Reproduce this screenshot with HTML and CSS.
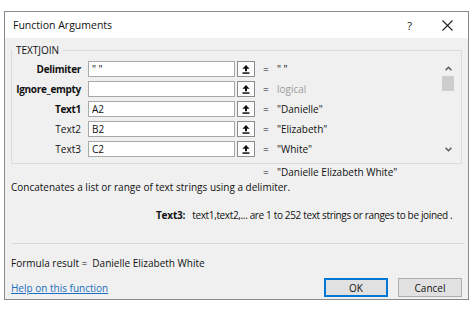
FILE: index.html
```html
<html lang="en">
<head>
  <meta charset="UTF-8">
  <title>Function Arguments</title>
  <link rel="stylesheet" href="styles.css">
</head>
<body>
  <div class="dialog">
    <div class="titlebar">
      <span class="title">Function Arguments</span>
      <span class="help">?</span>
      <span class="close">
        <svg width="11" height="11" viewBox="0 0 11 11"><path d="M0.5 0.5 L10.5 10.5 M10.5 0.5 L0.5 10.5" stroke="#222" stroke-width="1.1" fill="none"/></svg>
      </span>
    </div>

    <div class="content">
      <fieldset class="args">
        <legend>TEXTJOIN</legend>
        <div class="args-inner">
          <div class="rows">
            <div class="row">
              <label class="name bold">Delimiter</label>
              <div class="field">" "</div>
              <button class="pick"><svg width="8" height="9" viewBox="0 0 8 9"><path d="M4 0 L7.6 3.8 L5 3.8 L5 6.2 L3 6.2 L3 3.8 L0.4 3.8 Z" fill="#111"/><rect x="0.5" y="7.3" width="7" height="1.5" fill="#111"/></svg></button>
              <span class="eq">=</span>
              <span class="val">" "</span>
            </div>
            <div class="row">
              <label class="name bold">Ignore_empty</label>
              <div class="field"></div>
              <button class="pick"><svg width="8" height="9" viewBox="0 0 8 9"><path d="M4 0 L7.6 3.8 L5 3.8 L5 6.2 L3 6.2 L3 3.8 L0.4 3.8 Z" fill="#111"/><rect x="0.5" y="7.3" width="7" height="1.5" fill="#111"/></svg></button>
              <span class="eq">=</span>
              <span class="val muted">logical</span>
            </div>
            <div class="row">
              <label class="name bold">Text1</label>
              <div class="field">A2</div>
              <button class="pick"><svg width="8" height="9" viewBox="0 0 8 9"><path d="M4 0 L7.6 3.8 L5 3.8 L5 6.2 L3 6.2 L3 3.8 L0.4 3.8 Z" fill="#111"/><rect x="0.5" y="7.3" width="7" height="1.5" fill="#111"/></svg></button>
              <span class="eq">=</span>
              <span class="val">"Danielle"</span>
            </div>
            <div class="row">
              <label class="name">Text2</label>
              <div class="field">B2</div>
              <button class="pick"><svg width="8" height="9" viewBox="0 0 8 9"><path d="M4 0 L7.6 3.8 L5 3.8 L5 6.2 L3 6.2 L3 3.8 L0.4 3.8 Z" fill="#111"/><rect x="0.5" y="7.3" width="7" height="1.5" fill="#111"/></svg></button>
              <span class="eq">=</span>
              <span class="val">"Elizabeth"</span>
            </div>
            <div class="row">
              <label class="name">Text3</label>
              <div class="field">C2</div>
              <button class="pick"><svg width="8" height="9" viewBox="0 0 8 9"><path d="M4 0 L7.6 3.8 L5 3.8 L5 6.2 L3 6.2 L3 3.8 L0.4 3.8 Z" fill="#111"/><rect x="0.5" y="7.3" width="7" height="1.5" fill="#111"/></svg></button>
              <span class="eq">=</span>
              <span class="val">"White"</span>
            </div>
          </div>

          <div class="scroll">
            <div class="arrow"><svg width="7" height="5" viewBox="0 0 7 5"><path d="M0.6 4.2 L3.5 1.2 L6.4 4.2" stroke="#555" stroke-width="1.4" fill="none"/></svg></div>
            <div class="thumb"></div>
            <div class="track"></div>
            <div class="arrow"><svg width="7" height="5" viewBox="0 0 7 5"><path d="M0.6 0.8 L3.5 3.8 L6.4 0.8" stroke="#555" stroke-width="1.4" fill="none"/></svg></div>
          </div>
        </div>
      </fieldset>

      <div class="result"><span class="eq">=</span><span>"Danielle Elizabeth White"</span></div>
      <p class="desc">Concatenates a list or range of text strings using a delimiter.</p>
      <p class="argdesc"><b>Text3:</b><span>text1,text2,... are 1 to 252 text strings or ranges to be joined .</span></p>

      <hr class="sep">

      <p class="formula">Formula result =<span>Danielle Elizabeth White</span></p>

      <div class="footer">
        <a href="#" class="helplink">Help on this function</a>
        <button class="btn ok">OK</button>
        <button class="btn">Cancel</button>
      </div>
    </div>
  </div>
</body>
</html>
```

FILE: styles.css
```css
body{
  margin: 0;
  background: #fff;
  font-family: "Open Sans", "Noto Sans", sans-serif;
  font-size: 10px;
  color: #111;
}
.dialog{
  margin: 11px 0 0 4px;
  width: 465px;
  height: 289px;
  box-sizing: border-box;
  border: 1px solid #8a8a8a;
  background: #f0f0f0;
}
.titlebar{
  height: 26px;
  background: #fff;
  display: flex;
  align-items: center;
  padding-left: 8px;
}
.title{
  font-size: 10.5px;
}
.help{
  margin-left: auto;
  font-size: 11px;
}
.close{
  display: flex;
  margin: 0 15px 0 30px;
}
.content{
  padding: 5px 6px 0 6px;
}
.args{
  margin: 0;
  padding: 4px 0 6px 0;
  border: 1px solid #dcdcdc;
}
.args legend{
  padding: 0 4px;
  line-height: 14px;
}
.args-inner{
  display: flex;
}
.rows{
  flex: 1;
}
.row{
  display: flex;
  align-items: center;
  height: 16px;
  margin-bottom: 4px;
}
.row:last-child{
  margin-bottom: 0;
}
.name{
  width: 69px;
  margin-right: 7px;
  text-align: right;
}
.bold{
  font-weight: bold;
  letter-spacing: -0.3px;
}
.field{
  width: 147px;
  height: 16px;
  box-sizing: border-box;
  border: 1px solid #a9a9a9;
  background: #fff;
  padding-left: 3px;
  line-height: 14px;
}
.pick{
  width: 18px;
  height: 16px;
  margin: 0 0 0 2px;
  padding: 0;
  box-sizing: border-box;
  border: 1px solid #8c8c8c;
  background: #fcfcfc;
  display: flex;
  align-items: center;
  justify-content: center;
}
.eq{
  width: 14px;
  padding-left: 8px;
}
.muted{
  color: #9b9b9b;
}
.scroll{
  width: 14px;
  margin-right: 6px;
  display: flex;
  flex-direction: column;
  align-items: center;
}
.arrow{
  height: 15px;
  display: flex;
  align-items: center;
  justify-content: center;
}
.thumb{
  width: 12px;
  height: 15px;
  background: #cdcdcd;
}
.track{
  flex: 1;
}
.result{
  margin-left: 252px;
  line-height: 16px;
  display: flex;
}
.result .eq{
  padding-left: 0;
}
.desc{
  margin: 0;
  line-height: 14px;
}
.argdesc{
  margin: 14px 0 0 145px;
  line-height: 14px;
  white-space: nowrap;
}
.argdesc b{
  letter-spacing: -0.2px;
}
.argdesc span{
  margin-left: 7px;
  letter-spacing: -0.35px;
}
.sep{
  margin: 21px -2px 0 1px;
  border: 0;
  border-top: 1px solid #d9d9d9;
}
.formula{
  margin: 12px 0 0 0;
  line-height: 14px;
}
.formula span{
  margin-left: 5px;
}
.footer{
  display: flex;
  align-items: center;
  margin-top: 8px;
}
.helplink{
  color: #1a6ebd;
}
.btn{
  width: 64px;
  height: 19px;
  box-sizing: border-box;
  border: 1px solid #adadad;
  background: #e1e1e1;
  font-family: inherit;
  font-size: 10px;
  color: #111;
  padding: 0;
}
.ok{
  margin-left: auto;
  margin-right: 10px;
  border: 2px solid #0078d7;
}
```
